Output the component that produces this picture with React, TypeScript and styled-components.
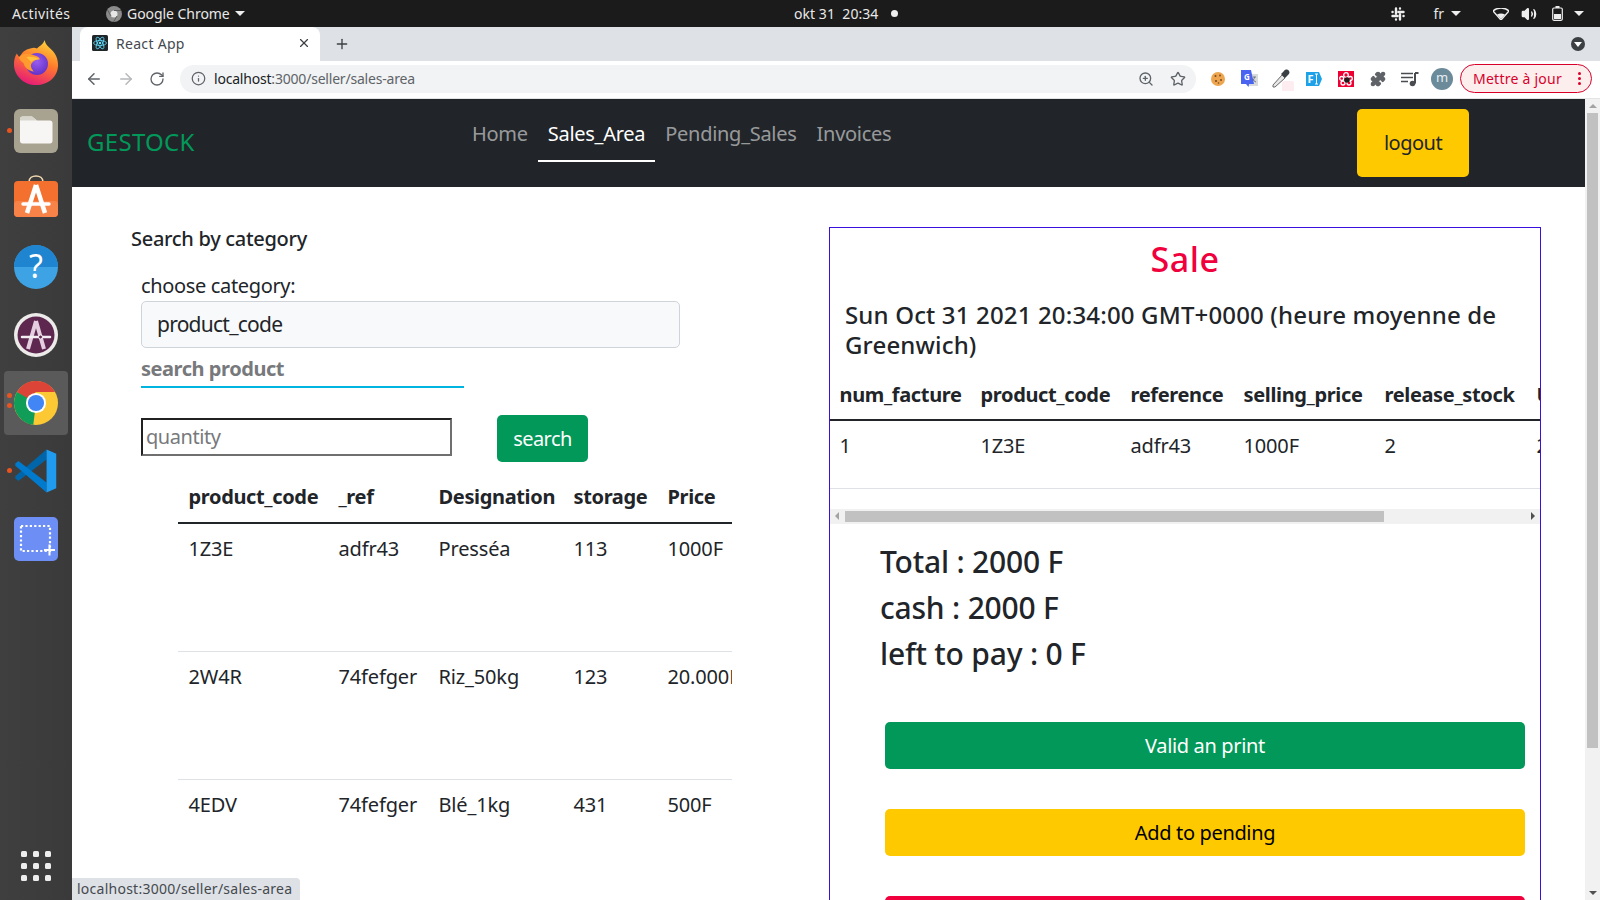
import React from "react";
import styled, { createGlobalStyle } from "styled-components";
import { ArrowLeft, ArrowRight, RotateCw, Info, ZoomIn, Star, X, Plus, Puzzle, Volume2 } from "lucide-react";

const Global = createGlobalStyle`
  html, body { margin: 0; padding: 0; background: #fff; overflow: hidden; }
  * { box-sizing: border-box; }
  #root { width: 1600px; height: 900px; }
`;

const FONT = `"Noto Sans", "Open Sans", sans-serif`;

const Screen = styled.div`
  width: 1600px; height: 900px; display: flex; flex-direction: column;
  position: relative; overflow: hidden; font-family: ${FONT}; color: #212529;
`;
const TopBar = styled.header`
  height: 27px; background: #1b1b1b; color: #e8e8e8; font-size: 14px; display: flex; align-items: center;
  flex: none; position: relative; padding: 0 0 0 12px;
`;
const TopLabel = styled.span<{ $w?: number; $ml?: number; $ls?: number }>`
  width: ${(p) => (p.$w ? p.$w + "px" : "auto")}; white-space: nowrap; letter-spacing: ${(p) => p.$ls ?? -0.05}px;
  margin-left: ${(p) => p.$ml ?? 0}px;
`;
const Clock = styled.div`
  position: absolute; left: 794px; top: 0; height: 27px; display: flex; align-items: center; gap: 13px; letter-spacing: 0.05px;
`;
const Dot = styled.i`
  width: 7px; height: 7px; border-radius: 50%; background: #eee; display: block;
`;
const Tray = styled.div`
  margin-left: auto; display: flex; align-items: center; padding-right: 16px; height: 100%;
`;
const TraySpace = styled.span<{ $w: number }>`
  width: ${(p) => p.$w}px; flex: none;
`;
const Caret = styled.i<{ $ml?: number }>`
  display: block; width: 0; height: 0; border-left: 5px solid transparent; border-right: 5px solid transparent;
  border-top: 5px solid #eee; margin-left: ${(p) => p.$ml ?? 0}px;
`;
const Body = styled.div`
  flex: 1; display: flex; min-height: 0;
`;
const Dock = styled.nav`
  width: 72px; flex: none; background: linear-gradient(90deg, #3f3f3f, #3a3a3a); display: flex; flex-direction: column;
  align-items: center; padding: 2px 0 0; position: relative;
`;
const DockItem = styled.div<{ $active?: boolean }>`
  width: 64px; height: 68px; display: flex; align-items: center; justify-content: center; position: relative;
  &::before {
    content: ""; position: absolute; inset: 2px 0; border-radius: 4px;
    background: ${(p) => (p.$active ? "#5a5a5a" : "transparent")};
  }
  svg { position: relative; }
`;
const DockDot = styled.i<{ $y: number }>`
  position: absolute; left: 3px; top: ${(p) => p.$y}px; width: 5px; height: 5px; border-radius: 50%; background: #e95420;
`;
const AppGrid = styled.div`
  margin-top: auto; margin-bottom: 19px; display: grid; grid-template-columns: repeat(3, 6px); gap: 6px;
  i { width: 6px; height: 6px; border-radius: 1.5px; background: #eee; display: block; }
`;
const Browser = styled.div`
  flex: 1; display: flex; flex-direction: column; min-width: 0;
`;
const TabStrip = styled.div`
  height: 34px; background: #dee1e6; display: flex; align-items: flex-end; padding-left: 8px; flex: none; position: relative;
`;
const Tab = styled.div`
  width: 240px; height: 34px; background: #fff; border-radius: 8px 8px 0 0; display: flex; align-items: center;
  padding: 0 9px 2px 12px; font-size: 14px; color: #45494e; gap: 8px; letter-spacing: 0.3px;
  span { flex: 1; }
  svg.close { color: #3c4043; }
`;
const NewTab = styled.div`
  margin-left: 14px; height: 34px; display: flex; align-items: center; color: #3c4043;
`;
const TabMenu = styled.div`
  margin-left: auto; margin-right: 15px; width: 14px; height: 14px; border-radius: 50%; background: #3c4043; align-self: center;
  display: flex; align-items: center; justify-content: center;
  i { width: 0; height: 0; border-left: 4px solid transparent; border-right: 4px solid transparent; border-top: 5px solid #fff; display: block; margin-top: 1px; }
`;
const Toolbar = styled.div`
  height: 38px; background: #fff; display: flex; align-items: center; flex: none; padding: 0 8px 2px 13px; border-bottom: 1px solid #e3e4e6;
`;
const NavIcon = styled.div<{ $dim?: boolean }>`
  width: 32px; display: flex; justify-content: flex-start; color: ${(p) => (p.$dim ? "#b6b8ba" : "#5f6368")};
`;
const UrlPill = styled.div`
  width: 1016px; height: 28px; margin-left: -1px; border-radius: 14px; background: #f1f3f4; display: flex; align-items: center;
  padding: 0 10px 0 11px; font-size: 14px; color: #5f6368;
  b { font-weight: 400; color: #202124; }
  span { flex: 1; margin-left: 8px; white-space: nowrap; letter-spacing: -0.2px; }
`;
const ToolGap = styled.span`
  width: 6px; flex: none;
`;
const Ext = styled.div`
  width: 32px; height: 28px; display: flex; align-items: center; justify-content: center; flex: none; position: relative;
`;
const Avatar = styled.div`
  width: 22px; height: 22px; border-radius: 50%; background: #6b8a9a; color: #e6eef2; font-size: 13px; display: flex;
  align-items: center; justify-content: center; line-height: 1; padding-bottom: 2px;
`;
const UpdatePill = styled.div`
  width: 132px; height: 29px; margin-left: 2px; border-radius: 15px; border: 1px solid #d8002a; background: #fdeeee; color: #d8002a;
  font-size: 14px; display: flex; align-items: center; justify-content: space-between; padding: 0 10px 0 12px; white-space: nowrap;
  letter-spacing: 0.25px;
  em { display: flex; flex-direction: column; gap: 2px; }
  em i { width: 3px; height: 3px; border-radius: 50%; background: #d8002a; display: block; }
`;
const Viewport = styled.div`
  flex: 1; display: flex; min-height: 0; position: relative;
`;
const Page = styled.main`
  flex: 1; min-width: 0; display: flex; flex-direction: column; overflow: hidden; background: #fff;
`;
const PageScroll = styled.div`
  width: 15px; flex: none; background: #f1f1f1; display: flex; flex-direction: column; align-items: center; padding-top: 5px; position: relative;
  i.up { width: 0; height: 0; border-left: 4px solid transparent; border-right: 4px solid transparent; border-bottom: 4px solid #a3a3a3; display: block; }
  b { display: block; width: 11px; height: 635px; background: #c1c1c1; margin-top: 5px; }
  i.down { position: absolute; bottom: 5px; left: 3.5px; width: 0; height: 0; border-left: 4px solid transparent; border-right: 4px solid transparent; border-top: 4px solid #505050; display: block; }
`;
const NavBar = styled.div`
  height: 88px; flex: none; background: #212529; display: flex; align-items: flex-start; padding: 0 116px 0 15px;
`;
const Brand = styled.div`
  width: 375px; font-size: 24px; line-height: 30px; color: #029859; margin-top: 28px; letter-spacing: 0.3px;
`;
const NavLinks = styled.div`
  display: flex; margin-top: 20px;
`;
const NavLink = styled.div<{ $active?: boolean }>`
  padding: 0 10px 11px; font-size: 20px; line-height: 30px; letter-spacing: -0.28px; white-space: nowrap;
  color: ${(p) => (p.$active ? "#fff" : "rgba(255,255,255,.55)")};
  border-bottom: 2px solid ${(p) => (p.$active ? "#fff" : "transparent")};
`;
const Logout = styled.button`
  margin-left: auto; margin-top: 10px; width: 112px; height: 68px; border: 0; border-radius: 5px; background: #ffc900; color: #212529;
  font: 400 20px ${FONT}; letter-spacing: -0.5px; padding-bottom: 3px;
`;
const Content = styled.div`
  flex: 1; display: flex; min-height: 0;
`;
const LeftCol = styled.section`
  width: 757px; flex: none; padding: 40px 0 0 59px;
`;
const Heading = styled.h5`
  margin: 0; font-size: 20px; line-height: 24px; font-weight: 500; letter-spacing: -0.3px;
`;
const Form = styled.div`
  padding-left: 10px; margin-top: 23px;
`;
const Label = styled.div`
  font-size: 20px; line-height: 24px; letter-spacing: -0.35px;
`;
const Select = styled.div`
  width: 539px; height: 47px; margin-top: 3px; border: 1px solid #ced4da; border-radius: 5px; background: #f8f9fa;
  padding-left: 15px; font-size: 21px; line-height: 44px; letter-spacing: -0.75px;
`;
const SearchField = styled.div`
  width: 323px; height: 40px; border-bottom: 2px solid #00b4e0; font-size: 20px; font-weight: 700; color: #77797c;
  line-height: 41px; letter-spacing: -0.45px;
`;
const QtyRow = styled.div`
  display: flex; align-items: flex-start; margin-top: 27px; gap: 45px;
`;
const QtyInput = styled.div`
  width: 311px; height: 38px; margin-top: 3px; border: 2px solid; border-color: #212121 #6f6f6f #6f6f6f #212121; color: #77797c;
  font-size: 20px; line-height: 34px; padding-left: 3px; letter-spacing: -0.45px;
`;
const GreenBtn = styled.button`
  width: 91px; height: 47px; border: 0; border-radius: 5px; background: #029859; color: #fff; font: 400 20px ${FONT}; letter-spacing: -0.6px;
  padding-bottom: 1px;
`;
const ProductWrap = styled.div`
  margin: 20px 0 0 47px; width: 554px; overflow: hidden;
`;
const Table = styled.table<{ $w: number }>`
  border-collapse: collapse; table-layout: fixed; width: ${(p) => p.$w}px;
`;
const Th = styled.th<{ $h: number; $pl: number }>`
  text-align: left; font-size: 20px; font-weight: 700; height: ${(p) => p.$h}px; padding: 0 0 10px ${(p) => p.$pl}px; vertical-align: middle;
  border-bottom: 2px solid #212529; white-space: nowrap; overflow: hidden; letter-spacing: -0.35px; line-height: 24px;
`;
const Td = styled.td<{ $h: number; $pl: number }>`
  font-size: 20px; height: ${(p) => p.$h}px; padding: 10px 0 0 ${(p) => p.$pl}px; vertical-align: top; line-height: 30px;
  border-bottom: 1px solid #dee2e6; white-space: nowrap; overflow: hidden; letter-spacing: -0.15px;
`;
const SalePanel = styled.aside`
  width: 712px; margin-top: 40px; height: 700px; border: 1px solid #3a10e0; flex: none; overflow: hidden; display: flex; flex-direction: column;
`;
const SaleTitle = styled.h2`
  margin: 10px 0 0; text-align: center; font-size: 34px; font-weight: 500; line-height: 42px; color: #f0003c; letter-spacing: 0.6px; flex: none;
`;
const DateLine = styled.h4`
  margin: 20px 10px 0 15px; font-size: 24px; line-height: 30px; font-weight: 500; letter-spacing: 0.16px; flex: none;
`;
const SaleWrap = styled.div`
  margin-top: 20px; overflow: hidden; width: 710px; flex: none;
`;
const FakeBar = styled.div`
  height: 15px; background: #f1f1f1; margin-top: 20px; display: flex; align-items: center; padding: 0 5px; flex: none;
  i.l { width: 0; height: 0; border-top: 4px solid transparent; border-bottom: 4px solid transparent; border-right: 4px solid #a3a3a3; display: block; }
  b { display: block; width: 539px; height: 11px; background: #c1c1c1; margin-left: 6px; }
  i.r { margin-left: auto; width: 0; height: 0; border-top: 4px solid transparent; border-bottom: 4px solid transparent; border-left: 4px solid #505050; display: block; }
`;
const Totals = styled.div`
  padding: 19px 0 0 50px; display: flex; flex-direction: column; gap: 8px; flex: none;
`;
const TotalLine = styled.div`
  font-size: 30px; line-height: 38px; font-weight: 500; letter-spacing: -0.2px;
`;
const Actions = styled.div`
  padding: 49px 15px 0 55px; display: flex; flex-direction: column; gap: 40px; flex: none;
`;
const ActionBtn = styled.button<{ $bg: string; $fg: string }>`
  height: 47px; border: 0; border-radius: 5px; background: ${(p) => p.$bg}; color: ${(p) => p.$fg}; font: 400 20px ${FONT};
  letter-spacing: -0.35px; flex: none;
`;
const StatusBubble = styled.div`
  position: absolute; left: 72px; bottom: 0; height: 22px; width: 228px; background: #dee1e6; border-radius: 0 4px 0 0; color: #45494e;
  font-size: 14px; line-height: 22px; padding-left: 5px; letter-spacing: 0.25px; white-space: nowrap;
`;

const Firefox = () => (
  <svg width="46" height="46" viewBox="0 0 48 48" style={{ marginTop: -2 }}>
    <defs>
      <linearGradient id="ff1" x1="0.7" y1="0" x2="0.3" y2="1">
        <stop offset="0" stopColor="#ffd43a" /><stop offset="0.45" stopColor="#ff7a2c" /><stop offset="1" stopColor="#e6177a" />
      </linearGradient>
      <radialGradient id="ff2" cx="0.5" cy="0.4" r="0.7">
        <stop offset="0" stopColor="#9a5cf0" /><stop offset="1" stopColor="#5a2bc0" />
      </radialGradient>
    </defs>
    <path d="M33 1c1 6 6 8 9 12 4 5 5 10 5 14 0 12-10 21-23 21C11 48 1 38 1 26c0-4 1-8 3-11 1 2 2 3 3 4 2-5 6-8 11-9 3-1 5-1 7 0 3-3 7-5 8-9z" fill="url(#ff1)" />
    <circle cx="25" cy="26" r="11.5" fill="url(#ff2)" />
    <path d="M6 19c3-3 8-5 12-3 4 1 9 2 10 5-4 0-7 2-9 5-1 3 1 6 3 8-6-1-10-4-11-9-2-1-4-3-5-6z" fill="#ff9a2e" />
    <path d="M14 19c4-1 9 0 14 2-4 0-7 1-9 3z" fill="#ffc23e" />
  </svg>
);
const Files = () => (
  <svg width="44" height="44" viewBox="0 0 44 44">
    <rect width="44" height="44" rx="6" fill="#a8a290" />
    <path d="M6 10c0-1.500 1-2.500 2.500-2.500H18l5 4h13c1.500 0 2.500 1 2.500 2.500v18c0 1.500-1 2.500-2.500 2.500H8.500C7 34.500 6 33.500 6 32z" fill="#f7f6f4" />
    <path d="M6 10c0-1.500 1-2.500 2.500-2.500H18l5 4H6z" fill="#d8d5cc" />
  </svg>
);
const Store = () => (
  <svg width="44" height="48" viewBox="0 0 44 48">
    <path d="M15 7c0-8 14-8 14 0" fill="none" stroke="#f2d9b0" strokeWidth="1.600" />
    <rect y="6" width="44" height="36" rx="4" fill="#f4702e" />
    <rect y="26" width="44" height="16" rx="4" fill="#f78348" />
    <path d="M22 10 13 38M22 10l9 28" stroke="#fff" strokeWidth="4.500" fill="none" />
    <path d="M9 29h26" stroke="#fff" strokeWidth="3.500" strokeLinecap="round" />
  </svg>
);
const Help = () => (
  <svg width="44" height="44" viewBox="0 0 44 44">
    <circle cx="22" cy="22" r="22" fill="#3ea3e4" />
    <path d="M0 22a22 22 0 0 1 44 0z" fill="#1f85d0" />
    <text x="22" y="33" textAnchor="middle" fill="#fff" fontSize="32" fontFamily="Noto Sans, sans-serif">?</text>
  </svg>
);
const Updater = () => (
  <svg width="44" height="44" viewBox="0 0 44 44">
    <circle cx="22" cy="22" r="22" fill="#ecebea" />
    <circle cx="22" cy="22" r="18.500" fill="#5e2750" />
    <path d="M22 8 14 36M22 8l8 28" stroke="#e4cfe0" strokeWidth="4" fill="none" />
    <path d="M8 24h28" stroke="#f3eef2" strokeWidth="2.500" strokeLinecap="round" />
    <circle cx="26.500" cy="24" r="2" fill="#5e2750" stroke="#f3eef2" />
  </svg>
);
const Chrome = () => (
  <svg width="44" height="44" viewBox="0 0 48 48">
    <circle cx="24" cy="24" r="24" fill="#fcc934" />
    <path d="M3.200 12A24 24 0 0 1 44.800 12H24L14 20z" fill="#db4437" />
    <path d="M3.200 12 24 24 21 47.800A24 24 0 0 1 3.200 12z" fill="#0f9d58" />
    <circle cx="24" cy="24" r="11" fill="#fff" />
    <circle cx="24" cy="24" r="8.800" fill="#4285f4" />
  </svg>
);
const VSCode = () => (
  <svg width="44" height="44" viewBox="0 0 100 100">
    <polygon points="74,1 74,24 10,73 3,67 3,62" fill="#0065a9" />
    <polygon points="10,27 74,76 74,99 3,38 3,33" fill="#007acc" />
    <polygon points="74,1 96,11 96,89 74,99" fill="#1f9cf0" />
  </svg>
);
const Shot = () => (
  <svg width="44" height="44" viewBox="0 0 44 44">
    <rect width="44" height="44" rx="5" fill="#6d8ff5" />
    <rect x="7" y="9" width="29" height="25" fill="none" stroke="#fff" strokeWidth="2.200" strokeDasharray="2.200 2.200" />
    <path d="M30 33h11M35.500 27.500v11" stroke="#fff" strokeWidth="2" />
  </svg>
);
const ChromeGlyph = () => (
  <svg width="16" height="16" viewBox="0 0 16 16">
    <circle cx="8" cy="8" r="8" fill="#8b8b8b" />
    <circle cx="8" cy="8" r="3.500" fill="#e6e6e6" />
    <path d="M8 4.500h7M5 10l-3.500-6M11 10l-3.500 6" stroke="#5f5f5f" />
  </svg>
);
const ReactFav = () => (
  <svg width="16" height="16" viewBox="0 0 16 16">
    <rect width="16" height="16" rx="1.500" fill="#1f2528" />
    <g fill="none" stroke="#61dafb" strokeWidth="0.800">
      <ellipse cx="8" cy="8" rx="6.500" ry="2.500" />
      <ellipse cx="8" cy="8" rx="6.500" ry="2.500" transform="rotate(60 8 8)" />
      <ellipse cx="8" cy="8" rx="6.500" ry="2.500" transform="rotate(120 8 8)" />
    </g>
    <circle cx="8" cy="8" r="1.300" fill="#61dafb" />
  </svg>
);
const Cookie = () => (
  <svg width="16" height="16" viewBox="0 0 16 16">
    <circle cx="8" cy="8" r="7" fill="#eda64f" />
    <g fill="#7a4a20">
      <circle cx="5.500" cy="5" r="1" /><circle cx="10" cy="4.500" r="0.900" /><circle cx="11" cy="9" r="1" />
      <circle cx="6" cy="10" r="1.100" /><circle cx="8.500" cy="12" r="0.800" />
    </g>
  </svg>
);
const Translate = () => (
  <svg width="18" height="18" viewBox="0 0 18 18">
    <rect x="7" y="4" width="10" height="12" fill="#d8dadb" />
    <path d="M12 7h3M13.500 7c-.3 2-1.500 4-3 5M11.500 8.500c.5 1.500 2 3 3.500 3.500" stroke="#6a6d6f" fill="none" strokeWidth="0.900" />
    <path d="M0 0h10l3 14H8l-.5 3-2.500-3H0z" fill="#4a63f0" />
    <text x="6" y="10" textAnchor="middle" fill="#fff" fontSize="8" fontWeight="700" fontFamily="Noto Sans, sans-serif">G</text>
  </svg>
);
const Dropper = () => (
  <svg width="24" height="24" viewBox="0 0 24 24">
    <rect x="12" y="14" width="12" height="12" rx="2" fill="#fdecf0" />
    <path d="M3 18 12 8l3 3-10 9H3z" fill="#e6e6e6" stroke="#6a6a6a" strokeWidth="1" />
    <path d="M11 7l3-3c1-2 4-2 5 0 1 1 .5 3-1 4l-3 3z" fill="#3a3f44" />
  </svg>
);
const FI = () => (
  <svg width="16" height="16" viewBox="0 0 16 16">
    <path d="M0 1h13l3 7-3 7H0z" fill="#1da1e8" />
    <text x="1.500" y="12" fill="#fff" fontSize="11" fontWeight="700" fontFamily="Noto Sans, sans-serif">F</text>
    <path d="M9 3h3M9 13h3M10.500 3v10" stroke="#fff" strokeWidth="1" />
  </svg>
);
const RedExt = () => (
  <svg width="16" height="16" viewBox="0 0 16 16">
    <rect width="16" height="16" fill="#ee0033" />
    <g fill="none" stroke="#fff" strokeWidth="1.300">
      <circle cx="8" cy="4" r="2.300" /><circle cx="3.700" cy="7.500" r="2" /><circle cx="12.300" cy="7.500" r="2" />
      <circle cx="5" cy="12" r="2" /><circle cx="11" cy="12" r="2" />
    </g>
    <circle cx="9" cy="9" r="2.800" fill="#1d1d1d" />
  </svg>
);
const Queue = () => (
  <svg width="18" height="16" viewBox="0 0 18 16">
    <path d="M0 2.500h12M0 6.500h12M0 10.500h7" stroke="#4a4d50" strokeWidth="1.500" fill="none" />
    <path d="M14 2v10.500" stroke="#4a4d50" strokeWidth="2" />
    <path d="M14 1h3.500v2H14z" fill="#4a4d50" />
    <circle cx="11.500" cy="12.500" r="2.800" fill="#4a4d50" />
  </svg>
);
const Slack = () => (
  <svg width="14" height="14" viewBox="0 0 14 14" stroke="#eee" strokeWidth="2.400" strokeLinecap="round">
    <path d="M5 1.500v5M9 7.500v5M1.500 9h5M7.500 5h5" />
    <path d="M1.500 5h.1M9 1.500v.1M12.500 9h.1M5 12.500v.1" />
  </svg>
);
const Wifi = () => (
  <svg width="16" height="12" viewBox="0 0 16 12">
    <path d="M0 3c4.500-4 11.500-4 16 0l-8 9z" fill="none" stroke="#eee" strokeWidth="1.400" />
    <path d="M4 6.500c2.500-1.500 5.500-1.500 8 0L8 11z" fill="#eee" />
  </svg>
);
const Battery = () => (
  <svg width="11" height="15" viewBox="0 0 11 15">
    <rect x="0.700" y="2" width="9.600" height="12.300" rx="1.200" fill="none" stroke="#eee" strokeWidth="1.200" />
    <rect x="3.500" y="0" width="4" height="2" fill="#eee" />
    <rect x="2" y="8" width="7" height="5" fill="#eee" />
  </svg>
);

const products = [
  ["1Z3E", "adfr43", "Presséa", "113", "1000F"],
  ["2W4R", "74fefger", "Riz_50kg", "123", "20.000F"],
  ["4EDV", "74fefger", "Blé_1kg", "431", "500F"],
];
const productCols = [150, 100, 135, 94, 100];
const saleCols = [141, 150, 113, 141, 152, 120];

export default function App() {
  return (
    <Screen>
      <Global />
      <TopBar>
        <TopLabel $w={94} $ls={0.4}>Activités</TopLabel>
        <ChromeGlyph />
        <TopLabel $ml={5}>Google Chrome</TopLabel>
        <Caret $ml={5} />
        <Clock><span>okt 31&nbsp; 20:34</span><Dot /></Clock>
        <Tray>
          <Slack />
          <TopLabel $ml={29}>fr</TopLabel>
          <Caret $ml={7} />
          <TraySpace $w={32} />
          <Wifi />
          <Volume2 size={16} color="#eee" fill="#eee" style={{ marginLeft: 12 }} />
          <TraySpace $w={15} />
          <Battery />
          <Caret $ml={11} />
        </Tray>
      </TopBar>
      <Body>
        <Dock>
          <DockItem><Firefox /></DockItem>
          <DockItem><DockDot $y={31} /><Files /></DockItem>
          <DockItem><Store /></DockItem>
          <DockItem><Help /></DockItem>
          <DockItem><Updater /></DockItem>
          <DockItem $active><DockDot $y={24} /><DockDot $y={34} /><Chrome /></DockItem>
          <DockItem><DockDot $y={31} /><VSCode /></DockItem>
          <DockItem><Shot /></DockItem>
          <AppGrid>{Array.from({ length: 9 }, (_, i) => <i key={i} />)}</AppGrid>
        </Dock>
        <Browser>
          <TabStrip>
            <Tab>
              <ReactFav />
              <span>React App</span>
              <X className="close" size={14} strokeWidth={2} />
            </Tab>
            <NewTab><Plus size={16} strokeWidth={2} /></NewTab>
            <TabMenu><i /></TabMenu>
          </TabStrip>
          <Toolbar>
            <NavIcon><ArrowLeft size={18} strokeWidth={2} /></NavIcon>
            <NavIcon $dim><ArrowRight size={18} strokeWidth={2} /></NavIcon>
            <NavIcon><RotateCw size={16} strokeWidth={2} /></NavIcon>
            <UrlPill>
              <Info size={15} color="#5f6368" />
              <span><b>localhost</b>:3000/seller/sales-area</span>
              <ZoomIn size={16} color="#5f6368" />
              <Star size={16} color="#5f6368" style={{ marginLeft: 16, marginRight: 0 }} />
            </UrlPill>
            <ToolGap />
            <Ext><Cookie /></Ext>
            <Ext><Translate /></Ext>
            <Ext><Dropper /></Ext>
            <Ext><FI /></Ext>
            <Ext><RedExt /></Ext>
            <Ext><Puzzle size={16} color="#5f6368" fill="#5f6368" /></Ext>
            <Ext><Queue /></Ext>
            <Ext><Avatar>m</Avatar></Ext>
            <UpdatePill>Mettre à jour<em><i /><i /><i /></em></UpdatePill>
          </Toolbar>
          <Viewport>
            <Page>
              <NavBar>
                <Brand>GESTOCK</Brand>
                <NavLinks>
                  <NavLink>Home</NavLink>
                  <NavLink $active>Sales_Area</NavLink>
                  <NavLink>Pending_Sales</NavLink>
                  <NavLink>Invoices</NavLink>
                </NavLinks>
                <Logout>logout</Logout>
              </NavBar>
              <Content>
                <LeftCol>
                  <Heading>Search by category</Heading>
                  <Form>
                    <Label>choose category:</Label>
                    <Select>product_code</Select>
                    <SearchField>search product</SearchField>
                    <QtyRow>
                      <QtyInput>quantity</QtyInput>
                      <GreenBtn>search</GreenBtn>
                    </QtyRow>
                  </Form>
                  <ProductWrap>
                    <Table $w={579}>
                      <colgroup>{productCols.map((w, i) => <col key={i} style={{ width: w }} />)}</colgroup>
                      <thead>
                        <tr>
                          {["product_code", "_ref", "Designation", "storage", "Price"].map((h) => <Th $h={41} $pl={10.5} key={h}>{h}</Th>)}
                        </tr>
                      </thead>
                      <tbody>
                        {products.map((r) => (
                          <tr key={r[0]}>{r.map((c) => <Td $h={128} $pl={10.5} key={c}>{c}</Td>)}</tr>
                        ))}
                      </tbody>
                    </Table>
                  </ProductWrap>
                </LeftCol>
                <SalePanel>
                  <SaleTitle>Sale</SaleTitle>
                  <DateLine>Sun Oct 31 2021 20:34:00 GMT+0000 (heure moyenne de Greenwich)</DateLine>
                  <SaleWrap>
                    <Table $w={817}>
                      <colgroup>{saleCols.map((w, i) => <col key={i} style={{ width: w }} />)}</colgroup>
                      <thead>
                        <tr>
                          {["num_facture", "product_code", "reference", "selling_price", "release_stock", "Unit"].map((h) => <Th $h={40} $pl={9.5} key={h}>{h}</Th>)}
                        </tr>
                      </thead>
                      <tbody>
                        <tr>
                          {["1", "1Z3E", "adfr43", "1000F", "2", "2000F"].map((c) => <Td $h={68} $pl={9.5} key={c}>{c}</Td>)}
                        </tr>
                      </tbody>
                    </Table>
                  </SaleWrap>
                  <FakeBar><i className="l" /><b /><i className="r" /></FakeBar>
                  <Totals>
                    <TotalLine>Total : 2000 F</TotalLine>
                    <TotalLine>cash : 2000 F</TotalLine>
                    <TotalLine>left to pay : 0 F</TotalLine>
                  </Totals>
                  <Actions>
                    <ActionBtn $bg="#029859" $fg="#fff">Valid an print</ActionBtn>
                    <ActionBtn $bg="#ffc900" $fg="#000">Add to pending</ActionBtn>
                    <ActionBtn $bg="#f0003c" $fg="#fff">Cancel</ActionBtn>
                  </Actions>
                </SalePanel>
              </Content>
            </Page>
            <PageScroll><i className="up" /><b /><i className="down" /></PageScroll>
          </Viewport>
        </Browser>
      </Body>
      <StatusBubble>localhost:3000/seller/sales-area</StatusBubble>
    </Screen>
  );
}
